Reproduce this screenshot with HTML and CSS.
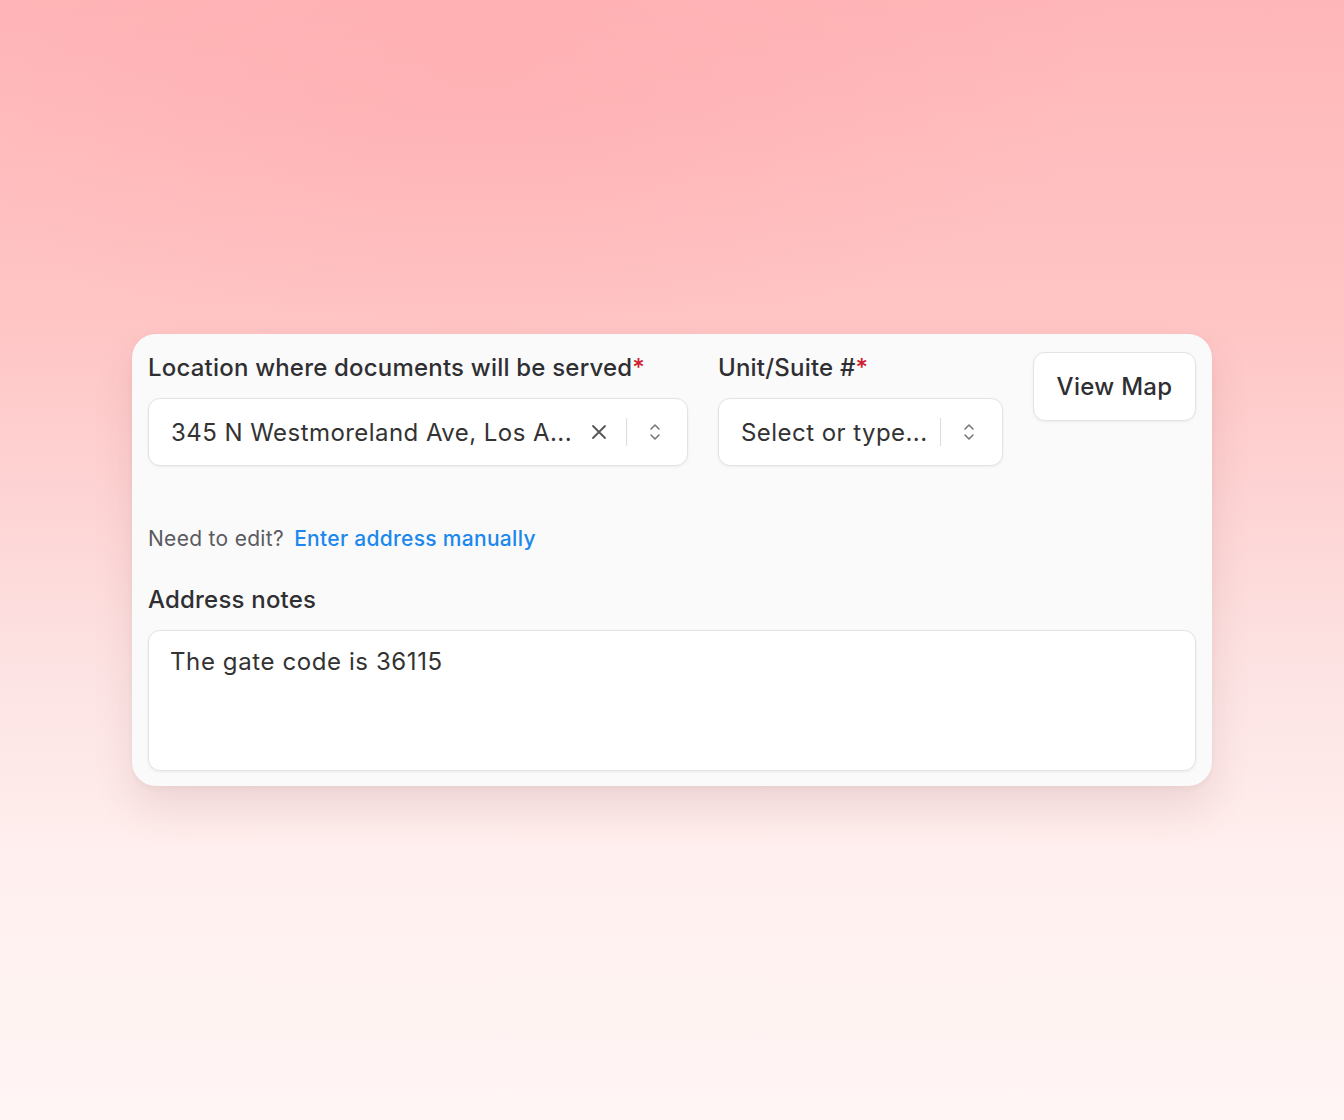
FILE: index.html
```html
<!DOCTYPE html>
<html lang="en">
<head>
  <meta charset="UTF-8" />
  <title>Address</title>
  <link rel="stylesheet" href="styles.css">
</head>
<body>

  <!-- Tarjeta de dirección -->
  <div class="card">
    <div class="fila">
      <div class="campo campo-ubicacion">
        <label class="etiqueta">Location where documents will be served<span class="req">*</span></label>
        <div class="caja">
          <span class="valor">345 N Westmoreland Ave, Los A...</span>
          <svg class="icono-x" width="18" height="18" viewBox="0 0 18 18" fill="none" stroke="#555" stroke-width="1.8" stroke-linecap="round"><path d="M3 3l12 12M15 3L3 15"/></svg>
          <span class="separador"></span>
          <svg class="icono-flechas" width="14" height="22" viewBox="0 0 14 22" fill="none" stroke="#777" stroke-width="1.6" stroke-linecap="round" stroke-linejoin="round"><path d="M3 8l4-4 4 4M3 14l4 4 4-4"/></svg>
        </div>
      </div>

      <div class="campo campo-unidad">
        <label class="etiqueta">Unit/Suite #<span class="req">*</span></label>
        <div class="caja">
          <span class="valor">Select or type...</span>
          <span class="separador"></span>
          <svg class="icono-flechas" width="14" height="22" viewBox="0 0 14 22" fill="none" stroke="#777" stroke-width="1.6" stroke-linecap="round" stroke-linejoin="round"><path d="M3 8l4-4 4 4M3 14l4 4 4-4"/></svg>
        </div>
      </div>

      <button class="boton-mapa">View Map</button>
    </div>

    <p class="ayuda">Need to edit? <a href="#">Enter address manually</a></p>

    <label class="etiqueta">Address notes</label>
    <div class="notas">The gate code is 36115</div>
  </div>

</body>
</html>
```

FILE: styles.css
```css
body {
  margin: 0;
  height: 1120px;
  font-family: "Inter", "Noto Sans", sans-serif;
  background:
    radial-gradient(ellipse 900px 420px at 480px 60px, rgba(255, 170, 174, 0.55), rgba(255, 170, 174, 0) 70%),
    linear-gradient(180deg, #ffb6b8 0%, #ffc6c6 30%, #fde3e3 60%, #fff1f0 80%, #fff5f4 100%);
  overflow: hidden;
}

.card {
  position: relative;
  top: 334px;
  margin-left: 132px;
  width: 1080px;
  box-sizing: border-box;
  padding: 17px 16px 15px;
  background: #fafafa;
  border-radius: 24px;
  box-shadow: 0 22px 40px rgba(120, 60, 60, 0.12), 0 2px 6px rgba(0, 0, 0, 0.04);
}

.fila {
  display: flex;
  gap: 30px;
  align-items: flex-start;
}

.campo {
  display: flex;
  flex-direction: column;
}

.campo-ubicacion {
  width: 540px;
}

.campo-unidad {
  width: 285px;
}

.etiqueta {
  display: block;
  font-size: 24px;
  font-weight: 500;
  line-height: 34px;
  letter-spacing: 0.2px;
  color: #2f2f33;
  margin-bottom: 13px;
}

.req {
  color: #d0202e;
}

.caja {
  display: flex;
  align-items: center;
  height: 68px;
  box-sizing: border-box;
  padding: 0 25px 0 22px;
  background: white;
  border: 1px solid #e3e3e6;
  border-radius: 12px;
  box-shadow: 0 1px 3px rgba(0, 0, 0, 0.06);
}

.valor {
  flex: 1;
  font-size: 24px;
  letter-spacing: 0.45px;
  color: #333;
  white-space: nowrap;
  overflow: hidden;
}

.separador {
  width: 1px;
  height: 28px;
  background: #dcdcdf;
  margin: 0 21px 0 18px;
}

.campo-unidad .caja {
  padding-right: 26px;
}

.campo-unidad .separador {
  margin-left: 12px;
}

.boton-mapa {
  margin-top: 1px;
  width: 163px;
  height: 69px;
  background: white;
  border: 1px solid #e3e3e6;
  border-radius: 12px;
  box-shadow: 0 1px 3px rgba(0, 0, 0, 0.06);
  font-family: inherit;
  font-size: 24px;
  font-weight: 500;
  letter-spacing: 0.3px;
  color: #2f2f33;
}

.ayuda {
  margin: 58px 0 29px;
  font-size: 21px;
  line-height: 30px;
  letter-spacing: 0.3px;
  color: #5a5a60;
}

.ayuda a {
  margin-left: 4px;
  color: #1b88ee;
  font-weight: 500;
  text-decoration: none;
}

.notas {
  height: 141px;
  box-sizing: border-box;
  padding: 15px 21px;
  background: white;
  border: 1px solid #e3e3e6;
  border-radius: 12px;
  box-shadow: 0 1px 3px rgba(0, 0, 0, 0.06);
  font-size: 24px;
  line-height: 32px;
  letter-spacing: 0.6px;
  color: #333;
}
```
